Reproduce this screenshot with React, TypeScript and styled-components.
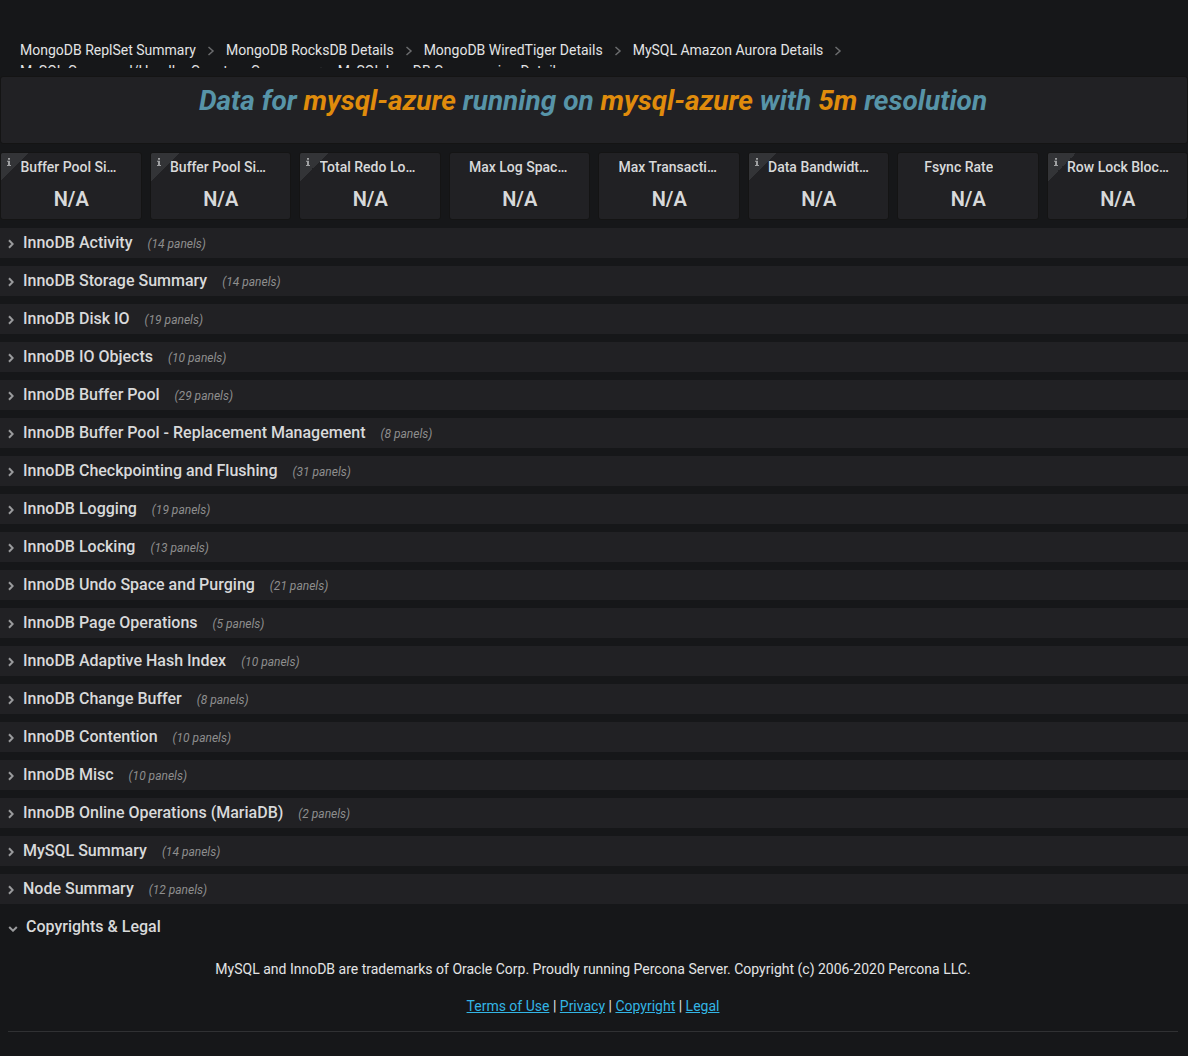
import React from "react";
import styled, { createGlobalStyle } from "styled-components";

const GlobalStyle = createGlobalStyle`
  *, *::before, *::after { box-sizing: border-box; }
  body {
    margin: 0;
    background: #161719;
    color: #d8d9da;
    font: 400 14px/20px Roboto, "Liberation Sans", sans-serif;
  }
`;

const Page = styled.main`
  display: flex;
  flex-direction: column;
  gap: 8px;
  padding-top: 36px;
`;

const Crumbs = styled.nav`
  display: flex;
  flex-wrap: wrap;
  align-content: flex-start;
  width: 74%;
  height: 32px;
  overflow: hidden;
  padding: 4px 0 0 20px;
`;

const Crumb = styled.span`
  display: flex;
  align-items: center;
  gap: 10px;
  height: 21px;
  margin-right: 10px;
  svg { color: #6b6c6e; }
`;

const CrumbLink = styled.a`
  color: #e3e4e5;
  line-height: 21px;
  text-decoration: none;
`;

const Panel = styled.section`
  position: relative;
  min-width: 0;
  height: 68px;
  background: #212124;
  border: 1px solid #141414;
  border-radius: 3px;
  overflow: hidden;
`;

const Headline = styled.h1`
  margin: 0;
  padding: 4px 2px 0 0;
  color: #5794a8;
  font-size: 28px;
  line-height: 40px;
  font-weight: 700;
  font-style: italic;
  text-align: center;
`;

const Highlight = styled.span`
  color: #e08c0c;
`;

const Stats = styled.div`
  display: grid;
  grid-template-columns: repeat(8, minmax(0, 1fr));
  gap: 8px;
`;

const StatTitle = styled.h2`
  height: 28px;
  margin: 0;
  padding: 0 9px 0 11px;
  overflow: hidden;
  font-size: 14px;
  line-height: 28px;
  font-weight: 500;
  text-align: center;
`;

const StatName = styled.span`
  display: inline-block;
  max-width: calc(100% - 17px);
  overflow: hidden;
  text-overflow: ellipsis;
  white-space: nowrap;
  vertical-align: top;
  text-align: left;
`;

const MenuSpace = styled.span`
  display: inline-block;
  width: 20px;
`;

const StatValue = styled.div`
  padding-left: 1px;
  font-size: 20px;
  line-height: 36px;
  font-weight: 600;
  text-align: center;
`;

const InfoCorner = styled.span`
  position: absolute;
  top: 0;
  left: 0;
  width: 28px;
  height: 28px;
  background: linear-gradient(135deg, #333437 50%, transparent 50%);
  svg {
    position: absolute;
    top: 5px;
    left: 6px;
  }
`;

const Row = styled.button<{ $open?: boolean }>`
  display: flex;
  align-items: center;
  width: 100%;
  height: 30px;
  padding: 0 8px;
  border: 0;
  background: ${(p) => (p.$open ? "transparent" : "#212124")};
  color: #d8d9da;
  font: inherit;
  text-align: left;
  cursor: pointer;
  svg {
    color: #9a9b9d;
    margin: ${(p) => (p.$open ? "4px 8px 0 0" : "2px 9px 0 0")};
  }
`;

const RowTitle = styled.span`
  font-size: 16px;
  font-weight: 500;
`;

const RowCount = styled.span`
  margin: 2px 0 0 15px;
  color: #8e8e8e;
  font-size: 12px;
  font-style: italic;
`;

const Footer = styled.footer`
  margin: 0 10px 0 8px;
  padding: 9px 0 15px;
  border-bottom: 1px solid #303133;
  text-align: center;
  color: #e3e4e5;
  p { margin: 0 0 17px; }
  p:last-child { margin: 0; }
`;

const FootLink = styled.a`
  color: #33b5e5;
  text-decoration: underline;
`;

const CrumbArrow = () => (
  <svg width="10" height="10" viewBox="0 0 10 10" fill="none" stroke="currentColor" strokeWidth="1.5">
    <path d="M2.5 1 7 5 2.5 9" />
  </svg>
);

const Closed = () => (
  <svg width="6" height="10" viewBox="0 0 6 10" fill="none" stroke="currentColor" strokeWidth="2">
    <path d="M1 1.2 4.7 5 1 8.8" />
  </svg>
);

const Opened = () => (
  <svg width="10" height="6" viewBox="0 0 10 6" fill="none" stroke="currentColor" strokeWidth="2">
    <path d="M1.2 1 5 4.7 8.8 1" />
  </svg>
);

const InfoMark = () => (
  <svg width="4" height="8" viewBox="0 0 4 8" fill="#a0a1a3">
    <path d="M1 0h2v1.7H1zM0 2.7h3V7h1v1H0V7h1V3.7H0z" />
  </svg>
);

const crumbs = [
  "MongoDB ReplSet Summary",
  "MongoDB RocksDB Details",
  "MongoDB WiredTiger Details",
  "MySQL Amazon Aurora Details",
  "MySQL Command/Handler Counters Compare",
  "MySQL InnoDB Compression Details",
];

const stats: [string, boolean][] = [
  ["Buffer Pool Size, Total", true],
  ["Buffer Pool Size of Total RAM", true],
  ["Total Redo Log Space", true],
  ["Max Log Space Used", false],
  ["Max Transaction History", false],
  ["Data Bandwidth Used", true],
  ["Fsync Rate", false],
  ["Row Lock Blocking", true],
];

const rows: [string, number][] = [
  ["InnoDB Activity", 14],
  ["InnoDB Storage Summary", 14],
  ["InnoDB Disk IO", 19],
  ["InnoDB IO Objects", 10],
  ["InnoDB Buffer Pool", 29],
  ["InnoDB Buffer Pool - Replacement Management", 8],
  ["InnoDB Checkpointing and Flushing", 31],
  ["InnoDB Logging", 19],
  ["InnoDB Locking", 13],
  ["InnoDB Undo Space and Purging", 21],
  ["InnoDB Page Operations", 5],
  ["InnoDB Adaptive Hash Index", 10],
  ["InnoDB Change Buffer", 8],
  ["InnoDB Contention", 10],
  ["InnoDB Misc", 10],
  ["InnoDB Online Operations (MariaDB)", 2],
  ["MySQL Summary", 14],
  ["Node Summary", 12],
];

export default function App() {
  return (
    <>
      <GlobalStyle />
      <Page>
        <Crumbs>
          {crumbs.map((name, i) => (
            <Crumb key={name}>
              <CrumbLink href="#">{name}</CrumbLink>
              {i < crumbs.length - 1 && <CrumbArrow />}
            </Crumb>
          ))}
        </Crumbs>
        <Panel>
          <Headline>
            Data for <Highlight>mysql-azure</Highlight> running on <Highlight>mysql-azure</Highlight> with{" "}
            <Highlight>5m</Highlight> resolution
          </Headline>
        </Panel>
        <Stats>
          {stats.map(([name, info]) => (
            <Panel key={name}>
              {info && (
                <InfoCorner>
                  <InfoMark />
                </InfoCorner>
              )}
              <StatTitle>
                <StatName>{name}</StatName>
                <MenuSpace />
              </StatTitle>
              <StatValue>N/A</StatValue>
            </Panel>
          ))}
        </Stats>
        {rows.map(([name, count]) => (
          <Row key={name} type="button">
            <Closed />
            <RowTitle>{name}</RowTitle>
            <RowCount>({count} panels)</RowCount>
          </Row>
        ))}
        <Row type="button" $open>
          <Opened />
          <RowTitle>Copyrights &amp; Legal</RowTitle>
        </Row>
        <Footer>
          <p>
            MySQL and InnoDB are trademarks of Oracle Corp. Proudly running Percona Server. Copyright (c) 2006-2020
            Percona LLC.
          </p>
          <p>
            <FootLink href="#">Terms of Use</FootLink> | <FootLink href="#">Privacy</FootLink> |{" "}
            <FootLink href="#">Copyright</FootLink> | <FootLink href="#">Legal</FootLink>
          </p>
        </Footer>
      </Page>
    </>
  );
}
